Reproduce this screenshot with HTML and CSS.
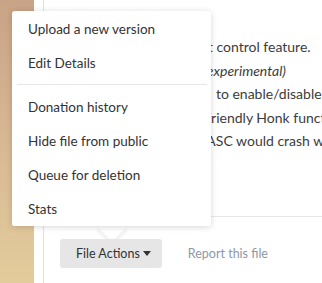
FILE: index.html
```html
<!DOCTYPE html>
<html lang="en">
<head>
  <meta charset="UTF-8">
  <title>File Actions</title>
  <link rel="stylesheet" href="styles.css">
</head>
<body>
  <div class="page">
    <aside class="sidebar"></aside>
    <div class="gutter"></div>
    <main class="content">
      <div class="description">
        <div class="line">This adds the new&nbsp; boost control feature.</div>
        <div class="line"><em>(Warning: this is still very experimental)</em></div>
        <div class="line">Added the config option&nbsp; to enable/disable the fix</div>
        <div class="line">because the previous&#8202;unfriendly Honk function</div>
        <div class="line">without it,&#8202;the old stock ASC would crash when</div>
      </div>
      <div class="actions">
        <div class="dropdown">
          <button class="btn" type="button">File Actions<span class="caret"></span></button>
          <ul class="menu">
            <li><a href="#">Upload a new version</a></li>
            <li><a href="#">Edit Details</a></li>
            <li class="divider"></li>
            <li><a href="#">Donation history</a></li>
            <li><a href="#">Hide file from public</a></li>
            <li><a href="#">Queue for deletion</a></li>
            <li><a href="#">Stats</a></li>
          </ul>
        </div>
        <a class="report" href="#">Report this file</a>
      </div>
    </main>
  </div>
</body>
</html>
```

FILE: styles.css
```css
body {
  margin: 0;
  padding: 0;
  font-family: Lato, 'Open Sans', Arial, sans-serif;
  font-size: 14px;
  color: #3c3c3c;
  background: #fff;
}
.page {
  display: flex;
  height: 283px;
  overflow: hidden;
}
.sidebar {
  width: 34px;
  flex-shrink: 0;
  background: linear-gradient(180deg, #c8a386 0%, #d8b893 50%, #e3cc9c 100%);
}
.gutter {
  width: 9px;
  flex-shrink: 0;
  border-right: 1px solid #e2e2e2;
}
.content {
  flex: 1;
  min-width: 0;
}
.description {
  height: 216px;
  padding: 35px 0 0 16px;
  box-sizing: border-box;
  overflow: hidden;
}
.line {
  white-space: nowrap;
  line-height: 23.5px;
}
.actions {
  border-top: 1px solid #e8e8e8;
  padding: 22px 0 0 16px;
  display: flex;
  align-items: center;
  gap: 26px;
}
.dropdown {
  position: relative;
}
.btn {
  height: 29px;
  padding: 0 11px 0 16px;
  border: none;
  border-radius: 3px;
  background: #e6e6e6;
  color: #333;
  font-family: inherit;
  font-size: 12.5px;
  display: flex;
  align-items: center;
  cursor: pointer;
}
.caret {
  width: 0;
  height: 0;
  margin-left: 3px;
  border-top: 5px solid #333;
  border-left: 4px solid transparent;
  border-right: 4px solid transparent;
}
.report {
  color: #8e98a3;
  font-size: 12.5px;
  text-decoration: none;
  line-height: 29px;
}
.menu {
  position: absolute;
  left: -48px;
  bottom: calc(100% + 13px);
  width: 199px;
  margin: 0;
  padding: 1px 0 0 0;
  list-style: none;
  background: #fff;
  border-radius: 3px;
  box-shadow: 0 1px 6px rgba(0, 0, 0, 0.16);
}
.menu::after {
  content: "";
  position: absolute;
  left: 89px;
  bottom: -11px;
  width: 22px;
  height: 22px;
  background: #fff;
  transform: rotate(45deg);
  box-shadow: 3px 3px 4px rgba(0, 0, 0, 0.06);
  z-index: -1;
}
.menu li a {
  display: block;
  padding: 7px 16px;
  line-height: 20px;
  font-size: 13.5px;
  color: #333;
  text-decoration: none;
  white-space: nowrap;
  position: relative;
  background: #fff;
}
.menu li:first-child a { border-radius: 3px 3px 0 0; }
.menu li:last-child a { border-radius: 0 0 3px 3px; }
.menu .divider {
  height: 1px;
  margin: 4px 4px 5px 5px;
  background: #e6e6e6;
}
```
